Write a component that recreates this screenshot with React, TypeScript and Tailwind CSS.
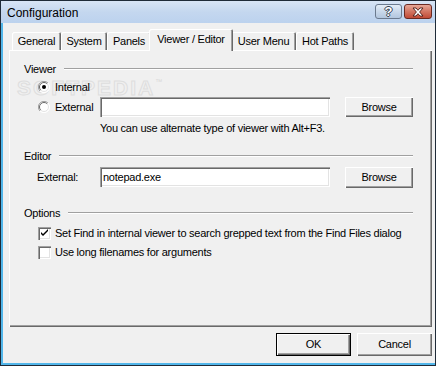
import React from "react";

const raised =
  "shadow-[inset_1px_1px_0_#ffffff,inset_-1px_-1px_0_#696969,inset_-2px_-2px_0_#a0a0a0]";
const sunken =
  "shadow-[inset_1px_1px_0_#a0a0a0,inset_2px_2px_0_#696969,inset_-1px_-1px_0_#ffffff,inset_-2px_-2px_0_#e3e3e3]";

function Radio({ checked }: { checked?: boolean }) {
  return (
    <svg width="12" height="12" viewBox="0 0 12 12" className="shrink-0">
      <circle cx="6" cy="6" r="5.5" fill="#ffffff" />
      <path d="M10 2 A5.5 5.5 0 0 0 2 10" fill="none" stroke="#a0a0a0" strokeWidth="1" />
      <path d="M2 10 A5.5 5.5 0 0 0 10 2" fill="none" stroke="#ffffff" strokeWidth="1" />
      <path d="M9.2 2.8 A4.5 4.5 0 0 0 2.8 9.2" fill="none" stroke="#696969" strokeWidth="1" />
      <path d="M2.8 9.2 A4.5 4.5 0 0 0 9.2 2.8" fill="none" stroke="#e3e3e3" strokeWidth="1" />
      {checked && <circle cx="6" cy="6" r="2" fill="#000000" />}
    </svg>
  );
}

function Check({ checked }: { checked?: boolean }) {
  return (
    <div className={`w-[13px] h-[13px] shrink-0 bg-white ${sunken} relative`}>
      {checked && (
        <svg width="13" height="13" viewBox="0 0 13 13" className="absolute left-0 top-0">
          <path d="M3 5 L3 7 L5 9 L10 4 L10 2 L5 7 Z" fill="#000000" />
        </svg>
      )}
    </div>
  );
}

function Button({ label, def, w, h }: { label: string; def?: boolean; w: string; h: string }) {
  return (
    <div
      className={`${w} ${h} shrink-0 bg-[#f0f0f0] flex items-center justify-center ${
        def
          ? "border border-[#000000] shadow-[inset_1px_1px_0_#ffffff,inset_-1px_-1px_0_#696969,inset_-2px_-2px_0_#a0a0a0]"
          : raised
      }`}
    >
      <span className="leading-none">{label}</span>
    </div>
  );
}

function GroupHeader({ label }: { label: string }) {
  return (
    <div className="h-[14px] flex items-center">
      <span className="shrink-0 leading-none">{label}</span>
      <div className="flex-1 ml-[8px] border-t border-t-[#a0a0a0] border-b border-b-[#ffffff]" />
    </div>
  );
}

function Tab({ label, w, selected }: { label: string; w: string; selected?: boolean }) {
  if (selected) {
    return (
      <div
        className={`${w} h-[22px] -mx-[2px] -mb-px relative z-10 bg-[#f0f0f0] rounded-t-[2px] flex items-center justify-center shadow-[inset_1px_1px_0_#ffffff,inset_-1px_0_0_#696969,inset_-2px_0_0_#a0a0a0] pb-[1px]`}
      >
        <span className="leading-none">{label}</span>
      </div>
    );
  }
  return (
    <div
      className={`${w} h-[18px] bg-[#f0f0f0] rounded-t-[2px] flex items-center justify-center shadow-[inset_1px_1px_0_#ffffff,inset_-1px_0_0_#696969,inset_-2px_0_0_#a0a0a0]`}
    >
      <span className="leading-none">{label}</span>
    </div>
  );
}

export default function App() {
  return (
    <div className="w-[436px] h-[366px] border border-[#1f2b38] flex flex-col font-['Liberation_Sans',Arial,sans-serif] text-[11px] tracking-[-0.25px] text-black overflow-hidden">
      {/* Title bar */}
      <div className="h-[22px] shrink-0 bg-[linear-gradient(#d8e5f5,#c4d7ef_50%,#bcd2ee)] flex items-start pl-[6px] pr-[3px]">
        <span className="text-[12px] tracking-normal leading-none mt-[6px]">Configuration</span>
        <div className="ml-auto mt-[3px] flex gap-[2px]">
          <div className="w-[27px] h-[15px] rounded-[3px] border border-[#6b7a8e] bg-[linear-gradient(#e4edf7,#c9d8ea_50%,#b2c6de)] flex items-center justify-center">
            <span className="text-[13px] font-bold leading-none text-white tracking-normal [text-shadow:1px_0_0_#34404f,-1px_0_0_#34404f,0_1px_0_#34404f,0_-1px_0_#34404f]">
              ?
            </span>
          </div>
          <div className="w-[28px] h-[15px] rounded-[3px] border border-[#6a2a22] bg-[linear-gradient(#e8a898,#d27562_50%,#c24a36)] flex items-center justify-center">
            <svg width="14" height="10" viewBox="0 0 14 10">
              <path
                d="M2 1 L5 1 L7 3.3 L9 1 L12 1 L8.6 5 L12 9 L9 9 L7 6.7 L5 9 L2 9 L5.4 5 Z"
                fill="#ffffff"
                stroke="#4a1a14"
                strokeWidth="0.9"
                strokeLinejoin="round"
              />
            </svg>
          </div>
        </div>
      </div>

      {/* Frame + client */}
      <div className="flex-1 bg-[#52b6ea] px-[2px] pb-[2px] flex">
        <div className="flex-1 bg-[#f0f0f0] pt-[6px] px-[6px] pb-[7px] flex flex-col">
          {/* Tabs */}
          <div className="h-[21px] shrink-0 flex items-end pl-[3px]">
            <Tab label="General" w="w-[49px]" />
            <Tab label="System" w="w-[46px]" />
            <Tab label="Panels" w="w-[44px]" />
            <Tab label="Viewer / Editor" w="w-[84px]" selected />
            <Tab label="User Menu" w="w-[65px]" />
            <Tab label="Hot Paths" w="w-[58px]" />
          </div>

          {/* Panel */}
          <div className={`h-[277px] shrink-0 relative bg-[#f0f0f0] ${raised} pl-[15px] pr-[19px] flex flex-col`}>
            {/* Watermark (behind content) */}
            <div className="absolute left-[8px] top-[27px] pointer-events-none select-none">
              <span className="text-[21px] font-bold tracking-[2px] leading-none text-transparent [-webkit-text-stroke:1px_#dedede]">
                SOFTPEDIA
              </span>
              <span className="text-[7px] align-top text-[#d8d8d8] tracking-normal">™</span>
            </div>

            <div className="mt-[12px] relative">
              <GroupHeader label="Viewer" />
            </div>
            <div className="mt-[3px] h-[16px] flex items-center ml-[14px] relative">
              <Radio checked />
              <span className="ml-[5px] leading-none">Internal</span>
            </div>
            <div className="mt-[1px] h-[22px] flex items-center ml-[14px] relative">
              <Radio />
              <span className="ml-[5px] w-[45px] shrink-0 leading-none">External</span>
              <div className={`w-[230px] h-[20px] shrink-0 bg-white ${sunken}`} />
              <div className="ml-[15px]">
                <Button label="Browse" w="w-[68px]" h="h-[20px]" />
              </div>
            </div>
            <div className="mt-[3px] h-[14px] flex items-center ml-[76px]">
              <span className="leading-none whitespace-nowrap">
                You can use alternate type of viewer with Alt+F3.
              </span>
            </div>

            <div className="mt-[14px]">
              <GroupHeader label="Editor" />
            </div>
            <div className="mt-[3px] h-[22px] flex items-center ml-[13px]">
              <span className="w-[63px] shrink-0 leading-none">External:</span>
              <div className={`w-[230px] h-[20px] shrink-0 bg-white ${sunken} flex items-center pl-[3px]`}>
                <span className="leading-none">notepad.exe</span>
              </div>
              <div className="ml-[15px]">
                <Button label="Browse" w="w-[68px]" h="h-[21px]" />
              </div>
            </div>

            <div className="mt-[18px]">
              <GroupHeader label="Options" />
            </div>
            <div className="mt-[5px] h-[16px] flex items-center ml-[14px]">
              <Check checked />
              <span className="ml-[4px] leading-none whitespace-nowrap">
                Set Find in internal viewer to search grepped text from the Find Files dialog
              </span>
            </div>
            <div className="mt-[3px] h-[16px] flex items-center ml-[14px]">
              <Check />
              <span className="ml-[4px] leading-none whitespace-nowrap">
                Use long filenames for arguments
              </span>
            </div>
          </div>

          {/* Bottom buttons */}
          <div className="mt-[6px] flex justify-end gap-[6px]">
            <Button label="OK" def w="w-[75px]" h="h-[23px]" />
            <Button label="Cancel" w="w-[75px]" h="h-[23px]" />
          </div>
        </div>
      </div>
    </div>
  );
}
